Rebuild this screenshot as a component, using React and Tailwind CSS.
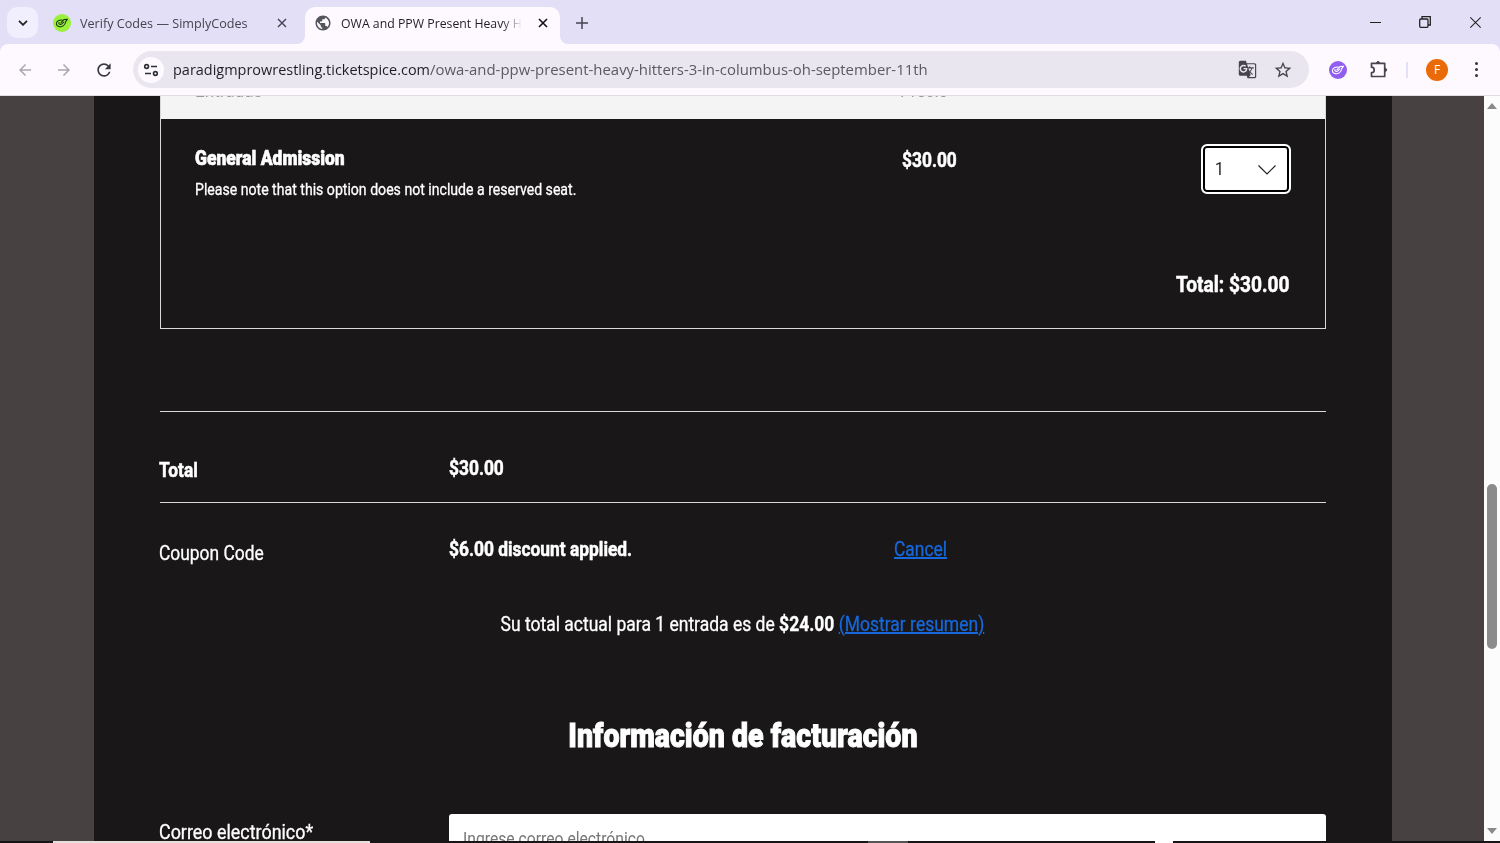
import { useState } from "react";
import {
  MdArrowBack,
  MdArrowForward,
  MdGTranslate,
  MdPublic,
  MdRefresh,
  MdStarBorder,
} from "react-icons/md";

const condensed = "inline-block whitespace-nowrap font-['Roboto',sans-serif]";
const regular = `${condensed} origin-left scale-x-[0.87] [-webkit-text-stroke:0.3px_currentColor]`;
const bold = `${condensed} origin-left scale-x-[0.868] font-bold [-webkit-text-stroke:0.5px_currentColor]`;

// SimplyCodes mark, used as tab favicon and as extension button
function SimplyMark({ bg, fg }) {
  return (
    <svg viewBox="0 0 18 18" className="size-[18px] shrink-0">
      <circle cx="9" cy="9" r="9" fill={bg} />
      <g fill="none" stroke={fg} strokeWidth="1.1" strokeLinecap="round" strokeLinejoin="round">
        <path d="M9.500 6.200C6.500 5.600 3.400 7.200 3.400 9.800c0 3 4.300 3.600 6.800 2.100 1.800-1.100 2.400-2.600 2.400-4.300" />
        <path d="M14.400 5.300L10.900 5.600 8 8.600M14.400 5.300l-1.700 2.300" />
        <path d="M6 8.600c-.6 1.800 1.700 2.400 3.200 1.100l1.500-1.500" />
      </g>
    </svg>
  );
}

function SiteInfoIcon() {
  return (
    <svg viewBox="0 0 16 16" className="size-4" fill="none" stroke="#2f2f36" strokeWidth="1.6">
      <circle cx="3.600" cy="4.500" r="1.900" />
      <path d="M8 4.500h6M2 11.500h6" />
      <circle cx="12.400" cy="11.500" r="1.900" />
    </svg>
  );
}

function PuzzleIcon() {
  return (
    <svg viewBox="0 0 20 20" className="size-5" fill="none" stroke="#45444f" strokeWidth="1.700" strokeLinejoin="round">
      <path d="M2.500 3.300h13.200v13.200H2.500v-3.900a2.700 2.700 0 0 0 0-5.400z" />
      <path d="M7.500 2.600a1.700 1.700 0 0 1 3.200 0zM16.500 8.300a1.700 1.700 0 0 1 0 3.200z" fill="#45444f" strokeWidth="1" />
    </svg>
  );
}

function CloseIcon({ className }) {
  return (
    <svg viewBox="0 0 10 10" className={className} fill="none" stroke="currentColor">
      <path d="M1 1l8 8M9 1L1 9" />
    </svg>
  );
}

function TabStrip() {
  return (
    <div className="flex h-11 shrink-0 bg-[#e2dff6] text-[13px] font-['Open_Sans',sans-serif]">
      <button className="ml-[7px] mt-[7px] flex size-[31px] items-center justify-center rounded-[10px] bg-[#f1eefd]">
        <svg viewBox="0 0 10 6" className="h-1.5 w-2.5" fill="none" stroke="#222" strokeWidth="1.800">
          <path d="M1 .8l4 4 4-4" />
        </svg>
      </button>

      <div className="ml-[15px] flex h-[45px] w-[252px] items-center">
        <SimplyMark bg="#9bf03c" fg="#1d3a14" />
        <span className="ml-[9px] w-[193px] pt-0.5 text-[#45434f]">
          <span className="inline-block origin-left scale-x-[0.97] whitespace-nowrap">
            Verify Codes — SimplyCodes
          </span>
        </span>
        <CloseIcon className="ml-1 size-2.5 stroke-[1.4] text-[#45434f]" />
      </div>

      {/* ACTIVE TAB */}
      <div className="relative flex w-[255px] items-start">
        <div className="mt-[7px] flex h-[37px] w-full items-center rounded-t-[10px] bg-[#fdf9ff] pb-[6px]">
          <MdPublic className="ml-[9px] size-[18px] shrink-0 text-[#55545c]" />
          <span className="ml-[9px] w-[183px] overflow-hidden pt-0.5 text-[#1f1e26] mask-r-from-88% mask-r-to-99%">
            <span className="inline-block origin-left scale-x-[0.945] whitespace-nowrap">
              OWA and PPW Present Heavy H
            </span>
          </span>
          <CloseIcon className="ml-[14px] size-2.5 shrink-0 stroke-[1.6] text-[#111]" />
        </div>
        {/* flared bottom corners */}
        <svg viewBox="0 0 8 8" className="absolute -left-2 bottom-0 size-2" fill="#fdf9ff">
          <path d="M8 0v8H0a8 8 0 0 0 8-8z" />
        </svg>
        <svg viewBox="0 0 8 8" className="absolute -right-2 bottom-0 size-2" fill="#fdf9ff">
          <path d="M0 0v8h8a8 8 0 0 1-8-8z" />
        </svg>
      </div>

      <svg viewBox="0 0 12 12" className="ml-4 mt-[17px] size-3" stroke="#45434f" strokeWidth="1.5">
        <path d="M6 0v12M0 6h12" />
      </svg>

      {/* WINDOW BUTTONS */}
      <div className="ml-auto mr-[18px] flex h-11 items-center gap-[38px] text-[#222]">
        <span className="h-px w-[11px] bg-[#222]" />
        <svg viewBox="0 0 12 12" className="size-3" fill="none" stroke="currentColor" strokeWidth="1.300">
          <rect x=".7" y="3" width="8.300" height="8.300" rx="1" />
          <path d="M3 3V.7h8.300V9H9" />
        </svg>
        <CloseIcon className="size-[13px] stroke-[0.8]" />
      </div>
    </div>
  );
}

function Toolbar() {
  return (
    <div className="bg-[#e2dff6]">
      <div className="flex h-[52px] items-center rounded-t-lg border-b border-[#dfdce4] bg-[#fdf9ff] font-['Open_Sans',sans-serif]">
        <MdArrowBack className="ml-4 size-[18px] text-[#a9a7b0]" />
        <MdArrowForward className="ml-[21px] size-[18px] text-[#a9a7b0]" />
        <MdRefresh className="ml-[21px] size-5 text-[#3b3a44]" />

        <div className="ml-[19px] flex h-[37px] w-[1176px] items-center rounded-full bg-[#e9e6f0]">
          <span className="ml-[5px] flex size-[26px] items-center justify-center rounded-full bg-[#fdf9ff]">
            <SiteInfoIcon />
          </span>
          <span className="ml-[9px] flex w-[1061px] text-[15px]">
            <span className="w-[257px] text-[#1f1e26]">
              <span className="inline-block origin-left scale-x-[0.964] whitespace-nowrap">
                paradigmprowrestling.ticketspice.com
              </span>
            </span>
            <span className="inline-block origin-left scale-x-[0.994] whitespace-nowrap text-[#5b5965]">
              /owa-and-ppw-present-heavy-hitters-3-in-columbus-oh-september-11th
            </span>
          </span>
          <MdGTranslate className="ml-1 size-[19px] shrink-0 text-[#45444f]" />
          <MdStarBorder className="ml-4 size-5 shrink-0 text-[#45444f]" />
        </div>

        <span className="ml-5">
          <SimplyMark bg="#915ff0" fg="#fff" />
        </span>
        <span className="ml-[22px]">
          <PuzzleIcon />
        </span>
        <span className="ml-[17px] h-4 w-0.5 bg-[#e2dff9]" />
        <span className="ml-[18px] flex size-[22px] items-center justify-center rounded-full bg-[#ea6a07] text-xs text-white">
          F
        </span>
        <span className="ml-[27px] flex flex-col gap-[3px]">
          <span className="size-[3px] rounded-full bg-[#333]" />
          <span className="size-[3px] rounded-full bg-[#333]" />
          <span className="size-[3px] rounded-full bg-[#333]" />
        </span>
      </div>
    </div>
  );
}

function TicketTable({ quantity, onChange }) {
  return (
    <div className="h-[233px] border border-t-0 border-[#d9d9d9]">
      <div className="flex h-[23px] overflow-hidden bg-[#f4f4f4] pl-[34px] text-lg leading-[18px] text-[#99999b]">
        <span className="-mt-[15px] w-[705px]">
          <span className={`${condensed} origin-left scale-x-[0.95]`}>Entradas</span>
        </span>
        <span className="-mt-[15px]">
          <span className={`${condensed} origin-left scale-x-[0.95]`}>Precio</span>
        </span>
      </div>

      <div className="flex h-[124px] pl-[34px] pr-[34px] pt-[25px]">
        <div className="w-[707px]">
          <h3 className="h-[27px] text-xl leading-[27px]">
            <span className={`${condensed} origin-left scale-x-[0.874] font-black [-webkit-text-stroke:0.6px_currentColor]`}>
              General Admission
            </span>
          </h3>
          <p className="mt-1.5 h-6 text-base leading-6">
            <span className={`${condensed} origin-left scale-x-[0.881] [-webkit-text-stroke:0.3px_currentColor]`}>
              Please note that this option does not include a reserved seat.
            </span>
          </p>
        </div>
        <div className="pt-0.5 text-xl leading-7">
          <span className={bold}>$30.00</span>
        </div>
        <button
          onClick={onChange}
          className="ml-auto flex h-[50px] w-[90px] items-center rounded-md border-2 border-white bg-white text-lg text-[#222] ring-2 ring-black ring-inset"
        >
          <span className="ml-3 pb-0.5">
            <span className={`${condensed} origin-left scale-x-[0.88]`}>{quantity}</span>
          </span>
          <svg viewBox="0 0 18 10" className="ml-auto mr-[13px] mt-px h-2.5 w-[18px]" fill="none" stroke="#222" strokeWidth="1.200">
            <path d="M.5.5L9 9l8.500-8.500" />
          </svg>
        </button>
      </div>

      <div className="mt-[20px] flex justify-end pr-[36px] pt-[7px] text-[22px] leading-[30px]">
        <span className={`${condensed} origin-right scale-x-[0.87] font-bold [-webkit-text-stroke:0.5px_currentColor]`}>
          Total: $30.00
        </span>
      </div>
    </div>
  );
}

function Scrollbar() {
  return (
    <div className="flex w-4 shrink-0 flex-col items-center bg-[#fdfcfd]">
      <svg viewBox="0 0 10 6" className="mt-[7px] h-1.5 w-2.5" fill="#8a8a8a">
        <path d="M5 0l5 6H0z" />
      </svg>
      <div className="mt-[375px] h-[165px] w-[10px] rounded-full bg-[#8b8b8b]" />
      <svg viewBox="0 0 10 6" className="mt-auto mb-[7px] h-1.5 w-2.5" fill="#8a8a8a">
        <path d="M5 6l5-6H0z" />
      </svg>
    </div>
  );
}

export default function App() {
  const [quantity, setQuantity] = useState(1);

  return (
    <div className="flex h-[843px] w-[1500px] flex-col overflow-hidden bg-[#474141]">
      <TabStrip />
      <Toolbar />

      <div className="flex h-[745px] shrink-0 overflow-hidden">
        <main className="ml-[94px] mr-[92px] w-[1298px] bg-[#191718] pl-[66px] pr-[66px] text-xl text-white">
          <TicketTable quantity={quantity} onChange={() => setQuantity(quantity)} />

          {/* TOTALS */}
          <div className="mt-[82px] flex h-[92px] border-y border-[#d9d9d9] pt-[42px] leading-7">
            <span className="-ml-px w-[290px] pt-0.5">
              <span className={bold}>Total</span>
            </span>
            <span className={bold}>$30.00</span>
          </div>

          <div className="mt-8 flex leading-7">
            <span className="-ml-px w-[290px] pt-1">
              <span className={regular}>Coupon Code</span>
            </span>
            <span className="w-[445px]">
              <span className={bold}>$6.00 discount applied.</span>
            </span>
            <a className={`${regular} h-7 text-[#1668dc] underline`}>Cancel</a>
          </div>

          <p className="mt-[43px] flex h-7 justify-center pr-px leading-7">
            <span className={`${condensed} origin-center scale-x-[0.875] [-webkit-text-stroke:0.3px_currentColor]`}>
              Su total actual para 1 entrada es de <b>$24.00</b>{" "}
              <a className="text-[#1668dc] underline">(Mostrar resumen)</a>
            </span>
          </p>

          <h2 className="mt-[73px] flex h-12 justify-center text-[34px] leading-12">
            <span className={`${condensed} origin-center scale-x-[0.84] font-black [-webkit-text-stroke:1px_currentColor]`}>
              Información de facturación
            </span>
          </h2>

          {/* BILLING */}
          <div className="mt-[55px] flex">
            <label className="-ml-px w-[290px] pt-1 leading-7">
              <span className={`${condensed} origin-left scale-x-[0.895] [-webkit-text-stroke:0.3px_currentColor]`}>
                Correo electrónico*
              </span>
            </label>
            <div className="h-[50px] w-[877px] rounded-[3px] bg-white pl-[14px] pt-[12px] text-lg leading-6 text-[#777]">
              <span className={`${condensed} origin-left scale-x-[0.872]`}>Ingrese correo electrónico</span>
            </div>
          </div>
        </main>
        <Scrollbar />
      </div>

      {/* taskbar edge */}
      <div className="flex h-0.5 shrink-0 bg-[#171516]">
        <span className="ml-[53px] w-[317px] bg-[#e5e0de]" />
        <span className="ml-[498px] w-10 bg-[#555]" />
        <span className="ml-[247px] w-[18px] bg-white" />
      </div>
    </div>
  );
}
